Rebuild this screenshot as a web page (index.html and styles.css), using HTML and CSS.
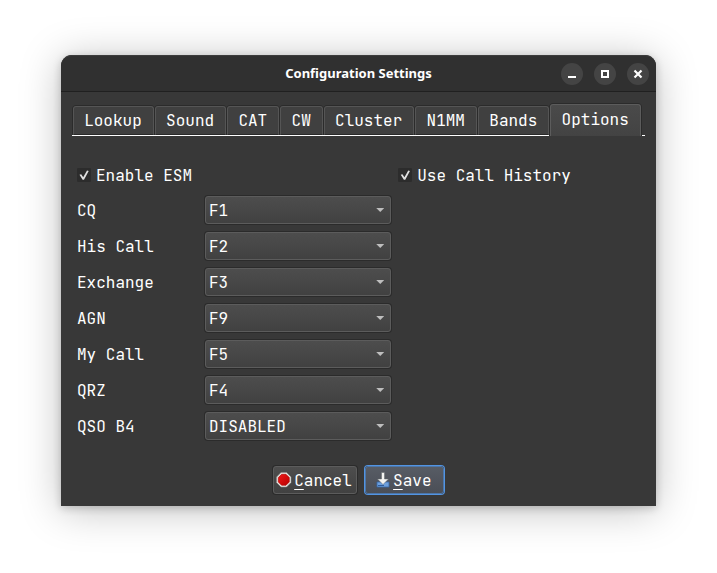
FILE: index.html
```html
<!DOCTYPE html>
<html lang="en">
<head>
<meta charset="utf-8">
<meta name="viewport" content="width=device-width, initial-scale=1">
<title>Configuration Settings</title>
<link rel="stylesheet" href="styles.css">
</head>
<body>
<main class="window">
  <header class="titlebar">
    <h1 class="title">Configuration Settings</h1>
    <div class="controls">
      <button class="control" type="button" aria-label="Minimize"><svg viewBox="0 0 22 22"><path d="M7 14h8" stroke="#fff" stroke-width="2"/></svg></button>
      <button class="control" type="button" aria-label="Maximize"><svg viewBox="0 0 22 22"><path d="M8 8h6v6H8z" fill="none" stroke="#fff" stroke-width="2"/></svg></button>
      <button class="control" type="button" aria-label="Close"><svg viewBox="0 0 22 22"><path d="M7.5 7.5l7 7M14.5 7.5l-7 7" stroke="#fff" stroke-width="2.2"/></svg></button>
    </div>
  </header>
  <form class="content">
    <div class="tabs" role="tablist">
      <button class="tab" type="button" role="tab">Lookup</button>
      <button class="tab" type="button" role="tab">Sound</button>
      <button class="tab" type="button" role="tab">CAT</button>
      <button class="tab" type="button" role="tab">CW</button>
      <button class="tab" type="button" role="tab">Cluster</button>
      <button class="tab" type="button" role="tab">N1MM</button>
      <button class="tab" type="button" role="tab">Bands</button>
      <button class="tab tab-active" type="button" role="tab" aria-selected="true">Options</button>
    </div>
    <div class="panel" role="tabpanel">
      <div class="keys">
        <div class="check"><input class="box" type="checkbox" id="esm" checked><label for="esm">Enable ESM</label></div>
        <div class="row"><label for="cq">CQ</label><span class="combo"><select id="cq"><option>F1</option></select></span></div>
        <div class="row"><label for="his">His Call</label><span class="combo"><select id="his"><option>F2</option></select></span></div>
        <div class="row"><label for="exch">Exchange</label><span class="combo"><select id="exch"><option>F3</option></select></span></div>
        <div class="row"><label for="agn">AGN</label><span class="combo"><select id="agn"><option>F9</option></select></span></div>
        <div class="row"><label for="my">My Call</label><span class="combo"><select id="my"><option>F5</option></select></span></div>
        <div class="row"><label for="qrz">QRZ</label><span class="combo"><select id="qrz"><option>F4</option></select></span></div>
        <div class="row"><label for="b4">QSO B4</label><span class="combo"><select id="b4"><option>DISABLED</option></select></span></div>
      </div>
      <div class="history">
        <div class="check"><input class="box" type="checkbox" id="hist" checked><label for="hist">Use Call History</label></div>
      </div>
    </div>
    <div class="actions">
      <button class="action" type="button"><svg class="icon" viewBox="0 0 16 16"><defs><linearGradient id="red" x1="0" y1="0" x2="1" y2="1"><stop offset="0" stop-color="#f01818"/><stop offset="1" stop-color="#b80000"/></linearGradient></defs><path d="M5 .6h5.500L15 5v5.500L10.500 15H5L.6 10.500V5z" fill="#eeeeea" stroke="#8a8a86" stroke-width=".6"/><path d="M5.600 2.300H10l3.300 3.300V10L10 13.300H5.600L2.300 10V5.600z" fill="url(#red)" stroke="#a80000" stroke-width=".6"/></svg><span class="caption"><u>C</u>ancel</span></button>
      <button class="action action-default" type="submit"><svg class="icon" viewBox="0 0 16 16"><path d="M2 10h12v5H2z" fill="#6d9fdc" stroke="#3667a8" stroke-width=".8"/><path d="M3 13.500h6" stroke="#2f5c9c"/><path d="M6.500 .5h3v6.500h4L8 12.500 2.500 7h4z" fill="#f4f4f2" stroke="#5f6468" stroke-width=".5"/></svg><span class="caption"><u>S</u>ave</span></button>
    </div>
  </form>
</main>
</body>
</html>
```
FILE: styles.css
```css
* { box-sizing: border-box; }

body {
  margin: 0;
  padding: 55px 61px 67px;
  background: #fff;
  color: #fff;
  font: 16px/20px "JetBrains Mono", "DejaVu Sans Mono", monospace;
}

button, select { font: inherit; color: inherit; }
button { padding: 0; }

.window {
  background: #383838;
  border-radius: 11px 11px 0 0;
  box-shadow: 0 2px 8px rgba(0, 0, 0, 0.2), 0 4px 40px rgba(0, 0, 0, 0.25);
}

.titlebar {
  display: grid;
  grid-template-columns: 1fr auto 1fr;
  align-items: center;
  height: 37px;
  padding: 0 7px;
  background: #303030;
  border-top: 1px solid #3c3c3c;
  border-bottom: 1px solid #202020;
  border-radius: 11px 11px 0 0;
}

.title {
  grid-column: 2;
  margin: 0;
  padding-bottom: 2px;
  font: bold 13px/18px "Noto Sans", sans-serif;
}

.controls {
  display: flex;
  justify-content: flex-end;
  gap: 11px;
}

.control {
  width: 22px;
  height: 22px;
  border: 0;
  border-radius: 50%;
  background: #444;
}

.control svg { display: block; }

.content { padding: 12px 11px; }

.tabs {
  display: flex;
  align-items: flex-end;
  gap: 1px;
  padding: 0 4px 0 1px;
  height: 32px;
  box-shadow: inset 0 -1px #fff;
}

.tab {
  flex: 1 1 auto;
  height: 29px;
  margin-bottom: 1px;
  padding: 0 11px 0 10px;
  border: 1px solid #555;
  border-bottom: 1px solid #2a2a2a;
  border-radius: 3px 3px 0 0;
  background: #404040;
  box-shadow: 0 -1px #2b2b2b, 1px 0 #2b2b2b, -1px 0 #2b2b2b;
}

.tab-active {
  height: 32px;
  margin-bottom: 0;
  padding-bottom: 2px;
  border-color: #5c5c5c;
  border-bottom: 0;
  background: linear-gradient(#4a4a4a, #434343);
}

.panel {
  display: grid;
  grid-template-columns: 13fr 10fr;
  gap: 7px;
  padding: 29px 5px 0;
}

.keys { display: grid; gap: 8px; }

.check {
  display: flex;
  align-items: center;
  height: 20px;
  gap: 5px;
}

.keys .check { margin-bottom: 3px; }

label, .caption { padding-top: 2px; }

.box {
  appearance: none;
  display: grid;
  place-items: center;
  width: 14px;
  height: 14px;
  margin: 0;
  border-radius: 1px;
  background: #2c2c2c;
}

.box:checked::before {
  content: "";
  width: 10px;
  height: 10px;
  background: #e0e0e0;
  clip-path: polygon(5% 48%, 22% 42%, 42% 72%, 80% 4%, 97% 10%, 50% 98%, 36% 98%);
}

.row {
  display: grid;
  grid-template-columns: 128px 1fr;
  align-items: center;
}

.combo { position: relative; display: block; }

.combo::after {
  content: "";
  position: absolute;
  top: 12px;
  right: 7px;
  width: 8px;
  height: 4px;
  background: #bebebe;
  clip-path: polygon(0 0, 100% 0, 50% 100%);
  pointer-events: none;
}

select {
  appearance: none;
  display: block;
  width: 100%;
  height: 28px;
  padding: 2px 20px 0 3px;
  border: 1px solid #5c5c5c;
  border-radius: 3px;
  background: linear-gradient(#4d4d4d, #414141);
  box-shadow: 0 0 0 1px #2b2b2b;
}

.actions {
  display: flex;
  justify-content: center;
  gap: 8px;
  padding-top: 26px;
}

.action {
  display: flex;
  align-items: center;
  justify-content: center;
  gap: 2px;
  height: 28px;
  padding: 0 4px 0 2px;
  border: 1px solid #5c5c5c;
  border-radius: 3px;
  background: linear-gradient(#4d4d4d, #414141);
  box-shadow: 0 0 0 1px #2b2b2b;
}

.action-default {
  min-width: 79px;
  border-color: #4d76a8;
  background: linear-gradient(#575c65, #4a4e56);
  box-shadow: 0 0 0 1px #5294e2;
}

.icon { width: 16px; height: 16px; }

u { text-underline-offset: 3px; text-decoration-thickness: 1px; }
```
